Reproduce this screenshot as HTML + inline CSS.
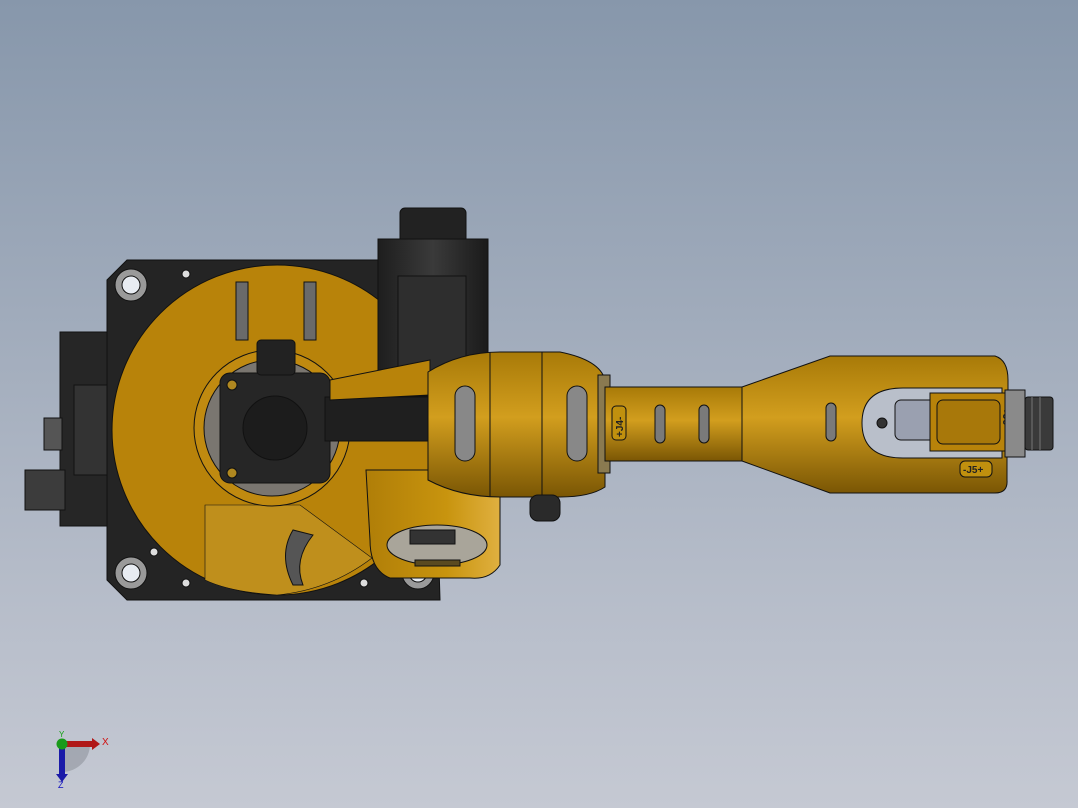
<!DOCTYPE html>
<html><head><meta charset="utf-8"><style>
html,body{margin:0;padding:0;width:1078px;height:808px;overflow:hidden}
body{background:linear-gradient(#8797ab,#b4bbc8 70%,#c5c9d3)}
svg{position:absolute;left:0;top:0}
text{font-family:"Liberation Sans",sans-serif}
</style></head><body>
<svg width="1078" height="808" viewBox="0 0 1078 808">
<defs>
<linearGradient id="y1" x1="0" y1="0" x2="0" y2="1"><stop offset="0" stop-color="#a87a08"/><stop offset=".45" stop-color="#d29e1e"/><stop offset="1" stop-color="#7a5604"/></linearGradient>
<linearGradient id="y2" x1="0" y1="0" x2="1" y2="0"><stop offset="0" stop-color="#b07e08"/><stop offset=".6" stop-color="#c8940e"/><stop offset="1" stop-color="#e0b040"/></linearGradient>
<linearGradient id="bk" x1="0" y1="0" x2="1" y2="0"><stop offset="0" stop-color="#1e1e1e"/><stop offset=".5" stop-color="#3a3a3a"/><stop offset="1" stop-color="#1a1a1a"/></linearGradient>
</defs>
<g stroke="#111" stroke-width="1">
<rect x="60" y="332" width="52" height="194" fill="#262626"/>
<rect x="74" y="385" width="40" height="90" fill="#333"/>
<rect x="44" y="418" width="18" height="32" fill="#555"/>
<rect x="25" y="470" width="40" height="40" fill="#3c3c3c"/>
<path d="M127 260 H430 L440 600 H127 L107 580 V280 Z" fill="#242424"/>
<circle cx="131" cy="285" r="16" fill="#9a9a9a"/><circle cx="131" cy="285" r="9" fill="#e8ecf2"/>
<circle cx="131" cy="573" r="16" fill="#9a9a9a"/><circle cx="131" cy="573" r="9" fill="#e8ecf2"/>
<circle cx="418" cy="573" r="16" fill="#9a9a9a"/><circle cx="418" cy="573" r="9" fill="#e8ecf2"/>
<circle cx="186" cy="274" r="4" fill="#ddd"/><circle cx="186" cy="583" r="4" fill="#ddd"/><circle cx="364" cy="583" r="4" fill="#ddd"/><circle cx="154" cy="552" r="4" fill="#ddd"/>
<circle cx="277" cy="430" r="165" fill="#b8830a"/>
<path d="M205 505 L300 505 L372 558 Q330 590 277 595 Q230 592 205 580 Z" fill="#bf8f1c" stroke-width=".6"/>
<rect x="236" y="282" width="12" height="58" fill="#6a6a6a"/><rect x="304" y="282" width="12" height="58" fill="#6a6a6a"/>
<circle cx="272" cy="428" r="78" fill="#c08a10"/>
<circle cx="272" cy="428" r="68" fill="#7a7670"/>
<rect x="220" y="373" width="110" height="110" rx="10" fill="#262626"/>
<circle cx="275" cy="428" r="32" fill="#1c1c1c"/>
<rect x="257" y="340" width="38" height="35" rx="4" fill="#222"/>
<circle cx="232" cy="385" r="5" fill="#b08820"/><circle cx="232" cy="473" r="5" fill="#b08820"/>
<path d="M293 530 q-15 25 0 55 l10 0 q-10 -25 10 -50 z" fill="#555"/>
<rect x="400" y="208" width="66" height="36" rx="5" fill="#222"/>
<rect x="378" y="239" width="110" height="160" fill="url(#bk)"/>
<rect x="398" y="276" width="68" height="120" fill="#2e2e2e"/>
<rect x="325" y="397" width="110" height="44" fill="#1f1f1f"/>
<path d="M330 380 L430 360 L430 395 L330 400 Z" fill="#b8830a"/>
<path d="M366 470 H500 V565 Q490 580 470 578 H390 Q370 570 370 540 Z" fill="url(#y2)"/>
<ellipse cx="437" cy="545" rx="50" ry="20" fill="#a9a59a"/>
<rect x="410" y="530" width="45" height="14" fill="#333"/>
<rect x="415" y="560" width="45" height="6" fill="#5a4a20"/>
<path d="M428 372 Q460 352 500 352 H560 Q600 360 605 380 V487 Q590 497 560 497 H500 Q460 497 428 480 Z" fill="url(#y1)"/>
<line x1="490" y1="352" x2="490" y2="497"/><line x1="542" y1="352" x2="542" y2="497"/>
<rect x="455" y="386" width="20" height="75" rx="10" fill="#888"/>
<rect x="567" y="386" width="20" height="75" rx="10" fill="#888"/>
<rect x="598" y="375" width="12" height="98" fill="#8a7a50"/>
<rect x="530" y="495" width="30" height="26" rx="8" fill="#2a2a2a"/>
<rect x="605" y="387" width="145" height="74" fill="url(#y1)"/>
<rect x="612" y="406" width="14" height="34" rx="4" fill="#c0900e"/>
<text x="0" y="0" font-size="10" font-weight="bold" fill="#222" stroke="none" transform="translate(623 437) rotate(-90)">+J4-</text>
<rect x="655" y="405" width="10" height="38" rx="5" fill="#7a7a7a"/>
<rect x="699" y="405" width="10" height="38" rx="5" fill="#7a7a7a"/>
<path d="M742 387 L830 356 H995 Q1008 360 1008 380 V395 H1007 V457 V480 Q1008 493 995 493 H830 L742 461 Z" fill="url(#y1)"/>
<path d="M1002 388 H903 Q862 388 862 423 Q862 458 903 458 H1002 Z" fill="#b9bfca"/>
<rect x="895" y="400" width="42" height="40" rx="6" fill="#9aa0b0"/>
<rect x="930" y="393" width="80" height="58" fill="#b8830a"/>
<rect x="937" y="400" width="63" height="44" rx="6" fill="#a8780a"/>
<circle cx="882" cy="423" r="5" fill="#333"/>
<rect x="826" y="403" width="10" height="38" rx="5" fill="#7a7a7a"/>
<rect x="960" y="461" width="32" height="16" rx="5" fill="#c0900e"/>
<text x="963" y="473" font-size="10" font-weight="bold" fill="#222" stroke="none">-J5+</text>
<text x="0" y="0" font-size="10" font-weight="bold" fill="#222" stroke="none" transform="translate(1003 408) rotate(90)">+J6-</text>
<rect x="1005" y="390" width="20" height="67" fill="#8a8a8a"/>
<rect x="1025" y="397" width="28" height="53" rx="3" fill="#3a3a3a"/>
<line x1="1032" y1="397" x2="1032" y2="450" stroke="#777"/><line x1="1040" y1="397" x2="1040" y2="450" stroke="#777"/>
</g>
<path d="M62 744 L90 744 A28 28 0 0 1 62 772 Z" fill="#8f949c" opacity=".6"/>
<rect x="62" y="741" width="30" height="6" fill="#b01818"/><path d="M92 738 L100 744 L92 750 Z" fill="#b01818"/>
<rect x="59" y="744" width="6" height="30" fill="#1a1aa8"/><path d="M56 774 L62 782 L68 774 Z" fill="#1a1aa8"/>
<circle cx="62" cy="744" r="5.5" fill="#1a9a1a"/>
<text x="102" y="745" font-size="10" fill="#d01010">X</text>
<text x="58" y="788" font-size="9" fill="#1010c0">Z</text>
<text x="59" y="737" font-size="8" fill="#10a010">Y</text>
</svg>
</body></html>
